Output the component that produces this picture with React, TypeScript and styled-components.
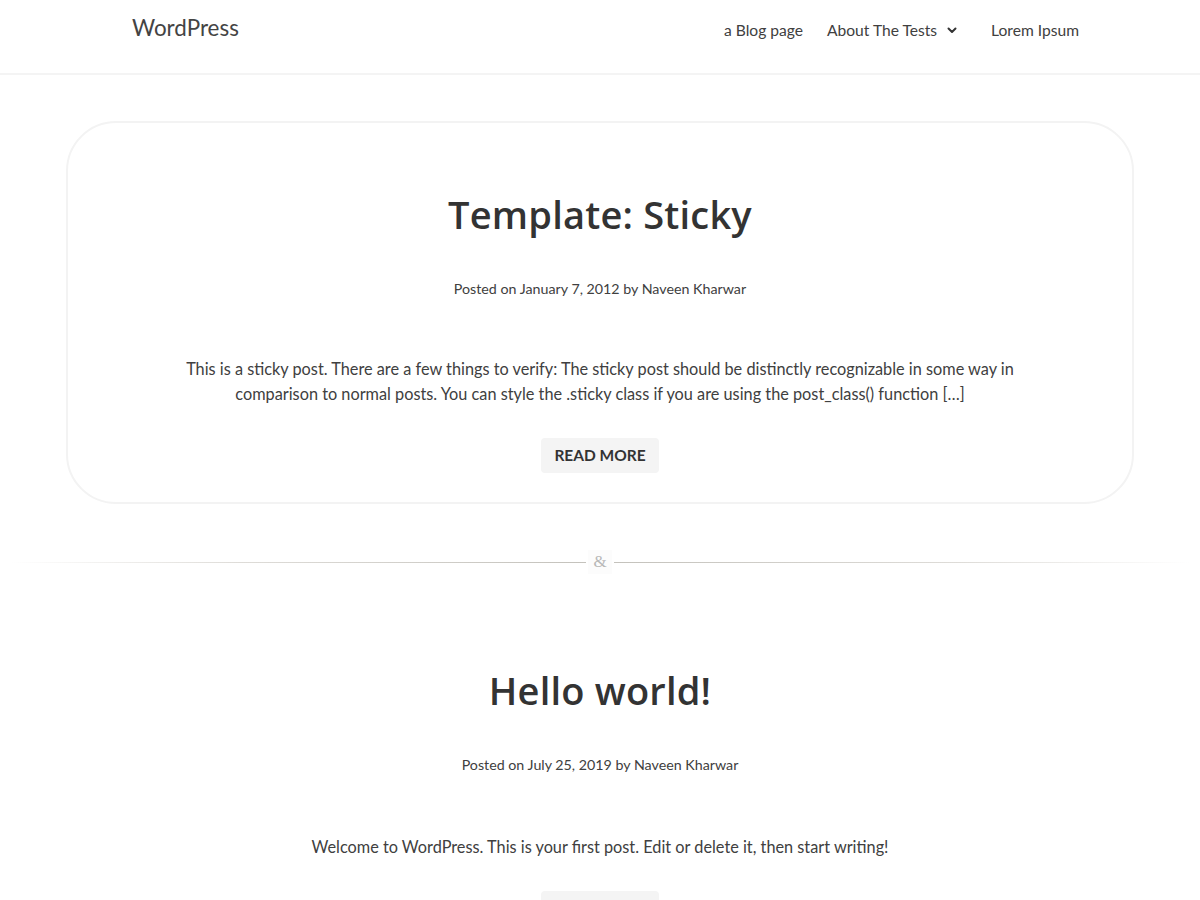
import React from "react";
import styled, { createGlobalStyle } from "styled-components";

const GlobalStyle = createGlobalStyle`
  body {
    margin: 0;
    background: #fff;
    font-family: Lato, "Liberation Sans", sans-serif;
    color: #404040;
  }
`;

const Header = styled.header`
  height: 73px;
  border-bottom: 2px solid #f4f4f4;
`;

const HeaderInner = styled.div`
  width: 960px;
  box-sizing: border-box;
  padding-left: 12px;
  padding-right: 1px;
  margin: 0 auto;
  display: flex;
  align-items: flex-start;
  justify-content: space-between;
`;

const Logo = styled.a`
  font-size: 22.4px;
  color: #444;
  text-decoration: none;
  line-height: 26px;
  margin-top: 15px;
`;

const Nav = styled.nav`
  display: flex;
  align-items: center;
  gap: 24px;
  margin-top: 20px;
`;

const NavItem = styled.a`
  font-size: 15.6px;
  color: #404040;
  text-decoration: none;
  display: flex;
  align-items: center;
  line-height: 20px;
`;

const Caret = styled.span`
  display: inline-flex;
  margin-left: 9px;
  margin-right: 9px;
`;

const Main = styled.main`
  padding-top: 46px;
`;

const Card = styled.article<{ $sticky?: boolean }>`
  width: 1068px;
  margin: 0 auto;
  box-sizing: border-box;
  border: 2px solid ${(p) => (p.$sticky ? "#f3f3f3" : "transparent")};
  border-radius: 50px;
  padding: 65px 40px 29px;
  text-align: center;
`;

const Title = styled.h1`
  font-family: "Open Sans", "Noto Sans", sans-serif;
  font-weight: 600;
  font-size: 38px;
  line-height: 52px;
  color: #333;
  margin: 0;
  letter-spacing: 0.2px;
`;

const Meta = styled.div`
  font-size: 14.25px;
  line-height: 20px;
  margin-top: 39px;
  color: #404040;
`;

const Excerpt = styled.p<{ $gap?: number }>`
  font-size: 16.3px;
  line-height: 25px;
  max-width: 860px;
  margin: ${(p) => p.$gap ?? 57}px auto 0;
  color: #404040;
`;

const ReadMore = styled.a`
  display: inline-block;
  margin-top: 32px;
  background: #f4f4f4;
  border-radius: 4px;
  padding: 0 13px;
  height: 35px;
  line-height: 35px;
  font-size: 15.5px;
  font-weight: 700;
  color: #333;
  text-decoration: none;
  text-transform: uppercase;
`;

const Separator = styled.div`
  display: flex;
  align-items: center;
  margin: 46px 10px 0;
`;

const Line = styled.div<{ $dir: "left" | "right" }>`
  flex: 1;
  height: 1px;
  background: linear-gradient(
    to ${(p) => p.$dir},
    #c4c2bc,
    #dedcd8 60%,
    rgba(240, 240, 240, 0)
  );
`;

const Amp = styled.span`
  font-family: "Liberation Serif", serif;
  font-size: 17px;
  color: #b8b8b8;
  background: #fcfcfc;
  padding: 2px 5px;
  margin: 0 2px;
  line-height: 20px;
`;

const SecondPost = styled(Card)`
  padding-top: 88px;
`;

const ChevronDown = () => (
  <svg width="12" height="12" viewBox="0 0 24 24" fill="none" stroke="#333" strokeWidth="4" strokeLinecap="round" strokeLinejoin="round">
    <polyline points="5 9 12 16 19 9" />
  </svg>
);

const posts = [
  {
    title: "Template: Sticky",
    date: "January 7, 2012",
    author: "Naveen Kharwar",
    excerpt:
      "This is a sticky post. There are a few things to verify: The sticky post should be distinctly recognizable in some way in comparison to normal posts. You can style the .sticky class if you are using the post_class() function […]",
    gap: 57,
  },
  {
    title: "Hello world!",
    date: "July 25, 2019",
    author: "Naveen Kharwar",
    excerpt: "Welcome to WordPress. This is your first post. Edit or delete it, then start writing!",
    gap: 59,
  },
];

const PostBody = ({ post }: { post: (typeof posts)[number] }) => (
  <>
    <Title>{post.title}</Title>
    <Meta>
      Posted on {post.date} by {post.author}
    </Meta>
    <Excerpt $gap={post.gap}>{post.excerpt}</Excerpt>
    <ReadMore href="#">Read More</ReadMore>
  </>
);

export default function App() {
  return (
    <>
      <GlobalStyle />
      <Header>
        <HeaderInner>
          <Logo href="#">WordPress</Logo>
          <Nav>
            <NavItem href="#">a Blog page</NavItem>
            <NavItem href="#">
              About The Tests
              <Caret>
                <ChevronDown />
              </Caret>
            </NavItem>
            <NavItem href="#">Lorem Ipsum</NavItem>
          </Nav>
        </HeaderInner>
      </Header>
      <Main>
        <Card $sticky>
          <PostBody post={posts[0]} />
        </Card>
        <Separator>
          <Line $dir="left" />
          <Amp>&amp;</Amp>
          <Line $dir="right" />
        </Separator>
        <SecondPost>
          <PostBody post={posts[1]} />
        </SecondPost>
      </Main>
    </>
  );
}
